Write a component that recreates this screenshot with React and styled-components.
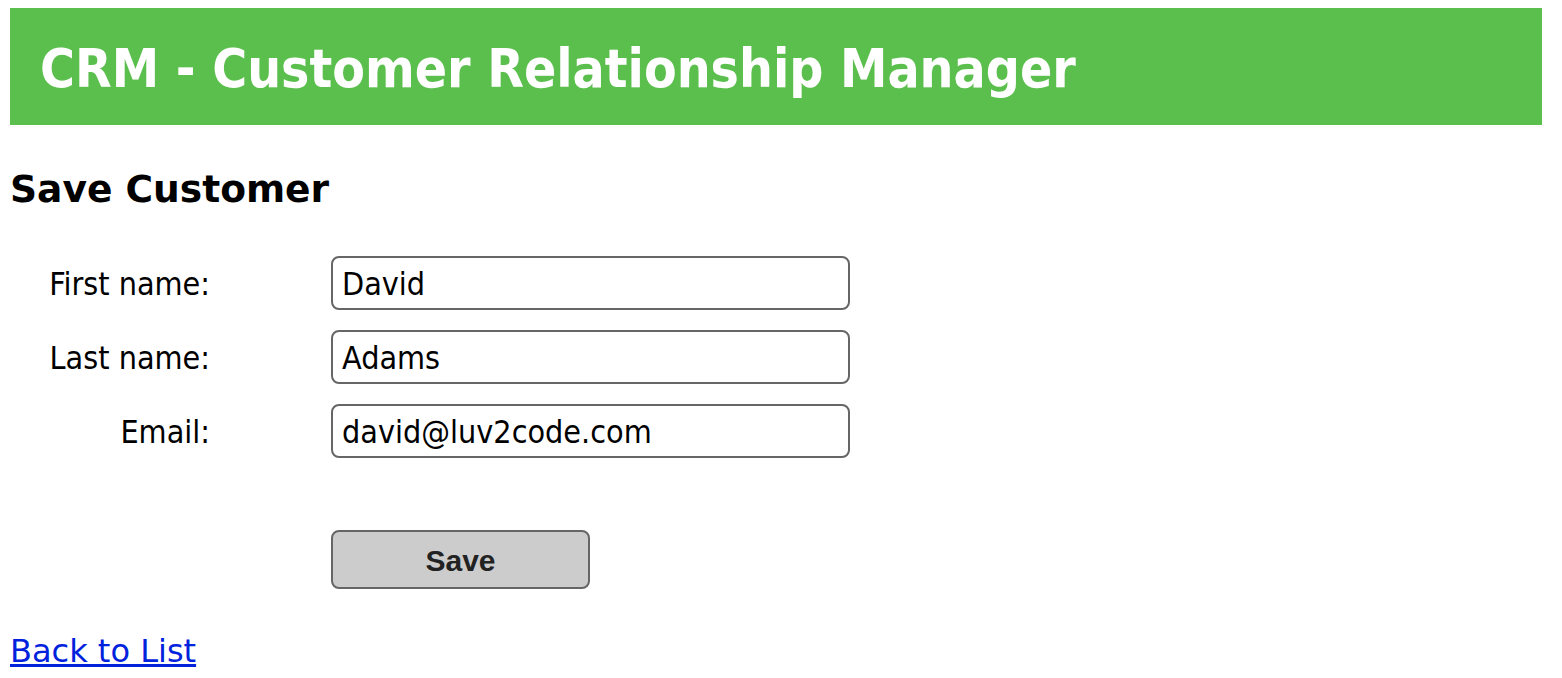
import React from "react";
import styled, { createGlobalStyle } from "styled-components";

const GlobalStyle = createGlobalStyle`
  html, body {
    margin: 0;
    background: #fff;
  }
  body {
    padding: 8px 20px 0 10px;
    font-family: "DejaVu Sans Condensed", Tahoma, "Noto Sans", sans-serif;
    color: #000;
  }
`;

const Header = styled.div`
  background: #5bbf4d;
  height: 117px;
  display: flex;
  align-items: center;
  padding-left: 30px;
`;

const Title = styled.h2`
  margin: 0;
  padding-top: 3px;
  color: #fff;
  font-size: 53px;
  font-weight: bold;
`;

const SubTitle = styled.h3`
  margin: 41px 0 0;
  font-family: "DejaVu Sans", Verdana, sans-serif;
  font-size: 37.6px;
  line-height: 46px;
  font-weight: bold;
`;

const Form = styled.form`
  margin-top: 44px;
  display: grid;
  grid-template-columns: 200px 519px;
  column-gap: 121px;
  row-gap: 20px;
  align-items: center;
`;

const Label = styled.label`
  text-align: right;
  font-size: 32px;
  padding-top: 2px;
`;

const Input = styled.input`
  box-sizing: border-box;
  width: 519px;
  height: 54px;
  border: 2px solid #666;
  border-radius: 8px;
  padding: 2px 9px 0;
  font-family: inherit;
  font-size: 32px;
  color: #000;
  background: #fff;
  outline: none;
`;

const ButtonCell = styled.div`
  grid-column: 2;
  margin-top: 52px;
`;

const SaveButton = styled.button`
  display: block;
  box-sizing: border-box;
  width: 259px;
  height: 59px;
  background: #ccc;
  border: 2px solid #666;
  border-radius: 8px;
  font-family: "Liberation Sans", Arial, sans-serif;
  font-weight: bold;
  font-size: 30px;
  color: #222;
  padding-top: 3px;
  cursor: pointer;
`;

const BackLink = styled.a`
  display: inline-block;
  margin-top: 43px;
  font-family: "DejaVu Sans", Verdana, sans-serif;
  font-size: 32px;
  color: #0022dd;
  text-decoration: underline;
`;

const fields = [
  { id: "firstName", label: "First name:", value: "David" },
  { id: "lastName", label: "Last name:", value: "Adams" },
  { id: "email", label: "Email:", value: "david@luv2code.com" },
];

const App = () => {
  return (
    <>
      <GlobalStyle />
      <Header>
        <Title>CRM - Customer Relationship Manager</Title>
      </Header>
      <SubTitle>Save Customer</SubTitle>
      <Form onSubmit={(e) => e.preventDefault()}>
        {fields.map((f) => (
          <React.Fragment key={f.id}>
            <Label htmlFor={f.id}>{f.label}</Label>
            <Input id={f.id} defaultValue={f.value} />
          </React.Fragment>
        ))}
        <ButtonCell>
          <SaveButton type="submit">Save</SaveButton>
        </ButtonCell>
      </Form>
      <BackLink href="#">Back to List</BackLink>
    </>
  );
};

export default App;
